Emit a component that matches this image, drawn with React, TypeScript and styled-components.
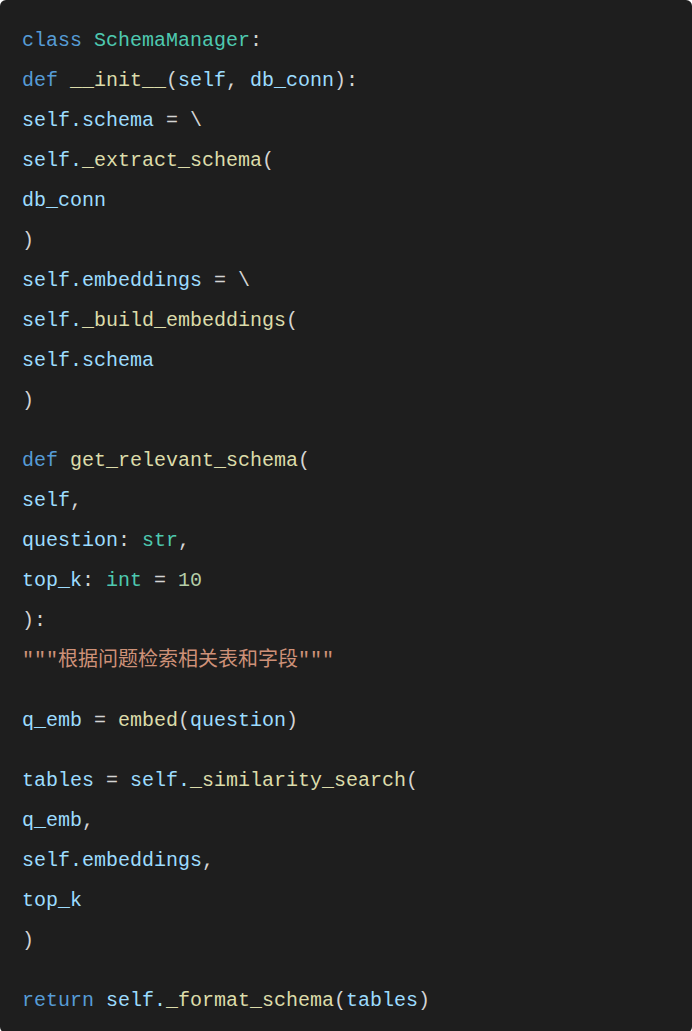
import React from "react";
import styled, { createGlobalStyle } from "styled-components";

const Global = createGlobalStyle`
  html, body { margin: 0; padding: 0; background: #ffffff; }
`;

type Kind = "kw" | "cls" | "fn" | "var" | "str" | "num" | "pun";

const colors: Record<Kind, string> = {
  kw: "#569cd6",
  cls: "#4ec9b0",
  fn: "#dcdcaa",
  var: "#9cdcfe",
  str: "#ce9178",
  num: "#b5cea8",
  pun: "#d4d4d4",
};

const CodeBlock = styled.pre`
  margin: 0;
  padding: 21px 22px 12px;
  background: #1e1e1e;
  border-radius: 6px;
  min-height: 1031px;
  box-sizing: border-box;
  font-family: "Liberation Mono", "Courier New", "Noto Sans CJK SC", monospace;
  font-size: 20px;
  color: #d4d4d4;
  display: flex;
  flex-direction: column;
`;

const Line = styled.div<{ $gap?: boolean }>`
  height: 40px;
  line-height: 40px;
  white-space: pre;
  margin-top: ${(p) => (p.$gap ? "20px" : "0")};
`;

const Tok = styled.span<{ $k: Kind }>`
  color: ${(p) => colors[p.$k]};
`;

type T = [Kind, string];
const lines: { gap?: boolean; toks: T[] }[] = [
  { toks: [["kw", "class "], ["cls", "SchemaManager"], ["pun", ":"]] },
  { toks: [["kw", "def "], ["fn", "__init__"], ["pun", "("], ["var", "self"], ["pun", ", "], ["var", "db_conn"], ["pun", "):"]] },
  { toks: [["var", "self.schema"], ["pun", " = \\"]] },
  { toks: [["var", "self."], ["fn", "_extract_schema"], ["pun", "("]] },
  { toks: [["var", "db_conn"]] },
  { toks: [["pun", ")"]] },
  { toks: [["var", "self.embeddings"], ["pun", " = \\"]] },
  { toks: [["var", "self."], ["fn", "_build_embeddings"], ["pun", "("]] },
  { toks: [["var", "self.schema"]] },
  { toks: [["pun", ")"]] },
  { gap: true, toks: [["kw", "def "], ["fn", "get_relevant_schema"], ["pun", "("]] },
  { toks: [["var", "self"], ["pun", ","]] },
  { toks: [["var", "question"], ["pun", ": "], ["cls", "str"], ["pun", ","]] },
  { toks: [["var", "top_k"], ["pun", ": "], ["cls", "int"], ["pun", " = "], ["num", "10"]] },
  { toks: [["pun", "):"]] },
  { toks: [["str", "\"\"\"根据问题检索相关表和字段\"\"\""]] },
  { gap: true, toks: [["var", "q_emb"], ["pun", " = "], ["fn", "embed"], ["pun", "("], ["var", "question"], ["pun", ")"]] },
  { gap: true, toks: [["var", "tables"], ["pun", " = "], ["var", "self."], ["fn", "_similarity_search"], ["pun", "("]] },
  { toks: [["var", "q_emb"], ["pun", ","]] },
  { toks: [["var", "self.embeddings"], ["pun", ","]] },
  { toks: [["var", "top_k"]] },
  { toks: [["pun", ")"]] },
  { gap: true, toks: [["kw", "return "], ["var", "self."], ["fn", "_format_schema"], ["pun", "("], ["var", "tables"], ["pun", ")"]] },
];

export default function App() {
  return (
    <>
      <Global />
      <CodeBlock>
        {lines.map((l, i) => (
          <Line key={i} $gap={l.gap}>
            {l.toks.map(([k, s], j) => (
              <Tok key={j} $k={k}>
                {s}
              </Tok>
            ))}
          </Line>
        ))}
      </CodeBlock>
    </>
  );
}
